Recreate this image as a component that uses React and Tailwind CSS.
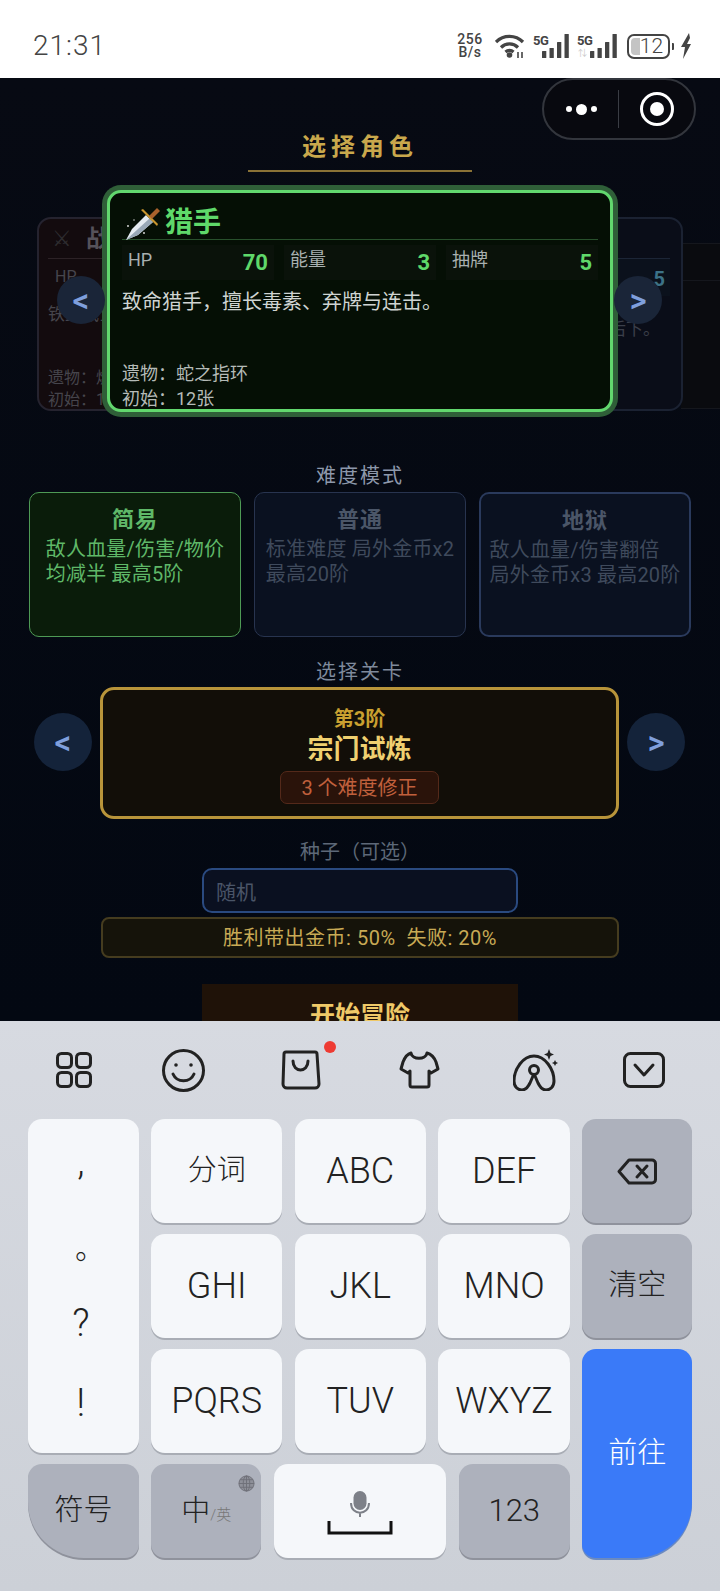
import { Fragment } from 'react'

const CJK = { fontFamily: 'Roboto, "Noto Sans CJK SC", sans-serif' }

const MODES = [
  { name: '简易', lines: ['敌人血量/伤害/物价', '均减半 最高5阶'], active: true },
  { name: '普通', lines: ['标准难度 局外金币x2', '最高20阶'] },
  { name: '地狱', lines: ['敌人血量/伤害翻倍', '局外金币x3 最高20阶'], thick: true },
]

function Bars() {
  return (
    <svg width="28" height="24" viewBox="0 0 28 24" className="absolute bottom-0 right-0" fill="#444">
      <rect x="1" y="17" width="4.300" height="7" rx="0.500" />
      <rect x="8.500" y="14" width="4.300" height="10" rx="0.500" />
      <rect x="16" y="8" width="4.300" height="16" rx="0.500" />
      <rect x="23.500" y="0" width="4.300" height="24" rx="0.500" />
    </svg>
  )
}

function StatusIcons() {
  return (
    <div className="flex items-center text-[#444]">
      <div className="flex w-[28px] flex-col items-center text-[14px] font-medium leading-[13px] tracking-[0.5px]">
        <span>256</span>
        <span>B/s</span>
      </div>
      <svg width="32" height="24" viewBox="0 0 32 24" className="ml-[11px]" fill="none" stroke="#444" strokeWidth="3.200">
        <path d="M1 8 A19 19 0 0 1 28 8" />
        <path d="M6 13.500 A12 12 0 0 1 23 13.500" />
        <path d="M10.500 18 A6 6 0 0 1 18.500 18" />
        <circle cx="14.500" cy="21" r="2.800" fill="#444" stroke="none" />
        <path d="M23 18v6M27 18v6" strokeWidth="1.600" />
      </svg>
      <div className="relative ml-[6px] h-[24px] w-[36px]">
        <span className="absolute left-0 top-0 text-[13px] font-bold leading-[13px] tracking-[-0.5px]">5G</span>
        <Bars />
      </div>
      <div className="relative ml-[8px] h-[24px] w-[40px]">
        <span className="absolute left-0 top-0 text-[13px] font-bold leading-[13px] tracking-[-0.5px]">5G</span>
        <span className="absolute bottom-0 left-[1px] text-[9px] leading-[10px] text-[#c8c8c8]">⇅</span>
        <Bars />
      </div>
      <div className="relative ml-[10px] flex h-[25px] w-[43px] items-center justify-center rounded-[7px] border-2 border-[#444] pl-[6px] text-[21px] font-light leading-none">
        <span className="absolute bottom-[2px] left-[2px] top-[2px] w-[9px] rounded-l-[4px] bg-[#c4c4c4]" />
        <span className="relative">12</span>
      </div>
      <span className="ml-[2px] h-[7px] w-[2px] rounded-r-[1px] bg-[#444]" />
      <svg width="12" height="26" viewBox="0 0 12 26" className="ml-[6px]">
        <path d="M9 0 1 14h4l-2 12 8-15H7l3-6z" fill="#444" />
      </svg>
    </div>
  )
}

function Sword() {
  return (
    <svg width="38" height="36" viewBox="0 0 38 36" className="mb-[-3px] ml-[2px] mr-[3px] shrink-0">
      <path d="M2 34 8 23 22 9l7 7-15 13z" fill="#e4ebf0" />
      <path d="M2 34 25.500 12.500 29 16 14 29z" fill="#98a8b6" />
      <path d="m17 4 2-1 15 15-1 2z" fill="#c9962e" />
      <path d="m25 10 8-8 3 3-8 8z" fill="#a8622c" />
      <circle cx="4" cy="20" r="0.900" fill="#e8e8e8" />
      <circle cx="20" cy="27" r="0.900" fill="#e8e8e8" />
      <circle cx="10" cy="14" r="0.700" fill="#e8e8e8" />
    </svg>
  )
}

function Stat({ label, value }) {
  return (
    <div className="flex h-[35px] flex-1 items-start justify-between bg-[#0a120a] px-[6px]">
      <span className="mt-[3px] text-[18px] leading-[24px] text-[#a8b0b0]">{label}</span>
      <span className="mt-[3px] text-[22px] font-bold leading-[30px] text-[#5fd86a]">{value}</span>
    </div>
  )
}

function Arrow({ dir, big, className }) {
  const size = big ? 'h-[58px] w-[58px] bg-[#14233a]' : 'h-[48px] w-[48px] bg-[#1a2538]'
  return (
    <div className={`flex shrink-0 items-center justify-center rounded-full text-[33px] font-medium leading-none text-[#7f9fdc] ${size} ${className || ''}`}>
      {dir}
    </div>
  )
}

function CharacterCarousel() {
  return (
    <div className="relative mt-[15px] h-[229px]">
      {/* cards behind the selected one */}
      <div className="absolute left-[681px] top-[56px] h-[166px] w-[60px] border-y border-[#15171d] bg-[#0a0b0f]">
        <div className="mt-[36px] border-t border-[#15171d]" />
      </div>
      <div className="absolute left-[37px] top-[30px] flex h-[194px] w-[300px] flex-col rounded-[14px] border-2 border-[#25232f] bg-[#130b0e] px-[9px]">
        <div className="flex h-[40px] shrink-0 items-center border-b border-[#2c2226] text-[24px] font-bold text-[#55525a]">
          <span className="ml-[4px] mr-[14px] text-[22px] font-normal text-[#2e2d30]">⚔</span>战士
        </div>
        <div className="px-[7px] text-[16px] leading-[36px] text-[#46454c]">HP</div>
        <div className="mt-[6px] text-[17px] leading-[26px] text-[#46454c]">铁血战士，攻防兼备。</div>
        <div className="mb-[-2px] mt-auto text-[16px] leading-[22px] text-[#46454c]">
          遗物：燃烧之血
          <br />
          初始：12张
        </div>
      </div>
      <div className="absolute left-[383px] top-[30px] flex h-[194px] w-[300px] flex-col items-end rounded-[14px] border-2 border-[#1b2232] bg-[#0a0d18] px-[11px]">
        <div className="h-[40px] w-full shrink-0 border-b border-[#1c2536]" />
        <div className="flex h-[37px] w-[150px] shrink-0 justify-end bg-[#0b111c] px-[5px] text-[20px] font-bold leading-[40px] text-[#3c7288]">5</div>
        <div className="mt-[20px] pr-[10px] text-[17px] leading-[26px] text-[#3b3f4a]">然后下。</div>
      </div>

      <div className="absolute left-[107px] top-[3px] flex h-[222px] w-[506px] flex-col rounded-[14px] border-[3px] border-[#62d86e] bg-[#050f05] px-[12px] shadow-[0_0_0_5px_#2f5f38]">
        <div className="flex h-[47px] shrink-0 items-end border-b border-[#28502c]">
          <Sword />
          <span className="mb-[-2px] text-[28px] font-bold leading-[36px] text-[#5fd86a]">猎手</span>
        </div>
        <div className="mt-[5px] flex gap-[10px]">
          <Stat label="HP" value="70" />
          <Stat label="能量" value="3" />
          <Stat label="抽牌" value="5" />
        </div>
        <div className="mt-[6px] text-[20px] leading-[32px] text-[#cfd4d2]">致命猎手，擅长毒素、弃牌与连击。</div>
        <div className="mb-[-2px] mt-auto text-[18px] leading-[25px] text-[#b5bbb8]">
          遗物：蛇之指环
          <br />
          初始：12张
        </div>
      </div>

      <Arrow dir="<" className="absolute left-[57px] top-[89px]" />
      <Arrow dir=">" className="absolute left-[614px] top-[89px]" />
    </div>
  )
}

function KeyboardIcons() {
  const s = { fill: 'none', stroke: '#222', strokeWidth: 3, strokeLinecap: 'round', strokeLinejoin: 'round' }
  return (
    <div className="flex h-[98px] items-center pl-[56px]">
      <svg width="36" height="36" viewBox="0 0 36 36" {...s}>
        <rect x="1.500" y="1.500" width="14" height="14" rx="4" />
        <rect x="20.500" y="1.500" width="14" height="14" rx="4" />
        <rect x="1.500" y="20.500" width="14" height="14" rx="4" />
        <rect x="20.500" y="20.500" width="14" height="14" rx="4" />
      </svg>
      <svg width="43" height="43" viewBox="0 0 43 43" className="ml-[70px]" {...s}>
        <circle cx="21.500" cy="21.500" r="20" />
        <path d="M11 25c4 9 17 9 21 0" />
        <circle cx="14" cy="16" r="1.800" fill="#222" stroke="none" />
        <circle cx="29" cy="16" r="1.800" fill="#222" stroke="none" />
      </svg>
      <div className="relative ml-[76px] h-[40px] w-[40px]">
        <svg width="40" height="40" viewBox="0 0 40 40" {...s}>
          <path d="M5 2h29a2 2 0 0 1 2 2l2 30a4 4 0 0 1-4 4H6a4 4 0 0 1-4-4L3 4a2 2 0 0 1 2-2z" />
          <path d="M12 11c0 12 15 12 15 0" />
        </svg>
        <span className="absolute right-[-15px] top-[-9px] h-[12px] w-[12px] rounded-full bg-[#ee3b33]" />
      </div>
      <svg width="42" height="38" viewBox="0 0 42 38" className="ml-[77px]" {...s}>
        <path d="M13 2c1 7 15 7 16 0 4 1 7 4 9 9l2 7-7 4-2-2v14a2 2 0 0 1-2 2H14a2 2 0 0 1-2-2V20l-2 2-7-4 2-7c2-5 4-8 8-9z" />
      </svg>
      <svg width="46" height="42" viewBox="0 0 46 42" className="ml-[73px]" {...s}>
        <path d="M9 41c-4 0-8-3-8-9C1 20 10 7 21 7s20 13 20 25c0 6-4 9-8 9s-6-3-8-7l-3-7h-2l-3 7c-2 4-4 7-8 7z" />
        <circle cx="21" cy="21" r="4.500" />
        <path d="m36 0 1.500 4L41 5.500 37.500 7 36 11l-1.500-4L31 5.500 34.500 4zM42 11l1 2 2 1-2 1-1 2-1-2-2-1 2-1z" fill="#222" stroke="none" />
      </svg>
      <svg width="42" height="36" viewBox="0 0 42 36" className="ml-[64px]" {...s}>
        <rect x="1.500" y="1.500" width="39" height="33" rx="6" />
        <path d="m12 13 9 10 9-10" />
      </svg>
    </div>
  )
}

function Key({ children, tone = 'light', className }) {
  const tones = {
    light: 'bg-[#f5f7fa] text-[#222] shadow-[0_2px_0_#a9adb5]',
    dark: 'bg-[#adb1bc] text-[#222] shadow-[0_2px_0_#8f929c]',
    blue: 'bg-[#3a7af8] text-white shadow-[0_2px_0_#6b8ac0]',
  }
  return (
    <div className={`flex items-center justify-center rounded-[14px] ${tones[tone]} ${className || ''}`}>
      {children}
    </div>
  )
}

function Keyboard() {
  const letter = 'text-[36px] font-light'
  const zh = 'text-[29px] font-light'
  return (
    <div className="h-[570px] bg-gradient-to-b from-[#d7dae1] to-[#ccd0d7]">
      <KeyboardIcons />
      <div className="grid grid-cols-[110.800px_131px_131.400px_131.400px_110px] grid-rows-[104px_104px_104px_94px] gap-x-[12.400px] gap-y-[11px] pl-[28px]">
        <Key className="row-span-3 flex-col !justify-start pr-[5px] pt-[23px] text-[38px] font-light">
          <span className="h-[40px] leading-[40px]">,</span>
          <span className="mt-[47px] h-[40px] pl-[18px] text-[30px] leading-[40px]">。</span>
          <span className="mt-[34px] h-[40px] leading-[40px]">?</span>
          <span className="mt-[40px] h-[40px] leading-[40px]">!</span>
        </Key>
        <Key className={zh}>分词</Key>
        <Key className={letter}>ABC</Key>
        <Key className={letter}>DEF</Key>
        <Key tone="dark">
          <svg width="40" height="27" viewBox="0 0 40 27" fill="none" stroke="#222" strokeWidth="3" strokeLinejoin="round" strokeLinecap="round">
            <path d="M12 2h23a3.500 3.500 0 0 1 3.500 3.500v16A3.500 3.500 0 0 1 35 25H12L2 13.500z" />
            <path d="m20 8 10 11M30 8 20 19" />
          </svg>
        </Key>
        <Key className={letter}>GHI</Key>
        <Key className={letter}>JKL</Key>
        <Key className={letter}>MNO</Key>
        <Key tone="dark" className={zh}>清空</Key>
        <Key className={letter}>PQRS</Key>
        <Key className={letter}>TUV</Key>
        <Key className={letter}>WXYZ</Key>
        <Key tone="blue" className={`row-span-2 rounded-br-[56px] ${zh}`}>前往</Key>
        <Key tone="dark" className={`rounded-bl-[56px] ${zh}`}>符号</Key>
        <div className="col-span-3 flex justify-between">
          <Key tone="dark" className="relative w-[110px]">
            <span className="text-[29px] font-light leading-none">中</span>
            <span className="mt-[8px] text-[15px] font-light text-[#777]">/英</span>
            <svg width="17" height="17" viewBox="0 0 18 18" className="absolute right-[6px] top-[11px]" fill="none" stroke="#6e7078" strokeWidth="1">
              <circle cx="9" cy="9" r="8" fill="#8e9099" />
              <ellipse cx="9" cy="9" rx="3.500" ry="8" />
              <path d="M1 9h16M2 5h14M2 13h14M9 1v16" />
            </svg>
          </Key>
          <Key className="w-[172px] flex-col">
            <svg width="66" height="46" viewBox="0 0 66 46" fill="none" className="mt-[4px]">
              <rect x="26.500" y="1" width="13" height="19" rx="6.500" fill="#7d8088" />
              <path d="M24 13c0 13 18 13 18 0M33 23v4" stroke="#7d8088" strokeWidth="2" />
              <path d="M2 31v12h62V31" stroke="#111" strokeWidth="3" />
            </svg>
          </Key>
          <Key tone="dark" className="w-[111px] text-[31px] font-light">123</Key>
        </div>
      </div>
    </div>
  )
}

export default function App() {
  return (
    <div className="flex h-[1591px] w-[720px] flex-col overflow-hidden" style={CJK}>
      <div className="flex h-[78px] shrink-0 items-center justify-between bg-white pl-[33px] pr-[28px] pt-[14px]">
        <span className="text-[28px] font-light tracking-[1px] text-[#444]">21:31</span>
        <StatusIcons />
      </div>

      <div className="relative h-[943px] shrink-0 overflow-hidden bg-gradient-to-b from-[#070a13] to-[#030812]">
        {/* WeChat mini program capsule */}
        <div className="absolute right-[24px] top-0 flex h-[62px] w-[154px] items-center rounded-full border-2 border-[#33363d] bg-[#08090f]">
          <div className="flex w-[74px] items-center justify-center gap-[4px]">
            <span className="h-[6px] w-[6px] rounded-full bg-white" />
            <span className="h-[11px] w-[11px] rounded-full bg-white" />
            <span className="h-[6px] w-[6px] rounded-full bg-white" />
          </div>
          <span className="h-[38px] w-px bg-[#3a3d44]" />
          <div className="flex flex-1 items-center justify-center">
            <span className="flex h-[34px] w-[34px] items-center justify-center rounded-full border-[3px] border-white">
              <span className="h-[14px] w-[14px] rounded-full bg-white" />
            </span>
          </div>
        </div>

        <div className="pt-[53px] text-center text-[24px] font-bold leading-[32px] tracking-[5px] text-[#c9a84c]">选择角色</div>
        <div className="mx-auto mt-[7px] h-[2px] w-[224px] bg-[#8a7236]" />

        <CharacterCarousel />

        <div className="mt-[46px] text-center text-[20px] leading-[28px] tracking-[2px] text-[#8d98ab]">难度模式</div>
        <div className="mt-[2px] flex gap-[13px] pl-[29px]">
          {MODES.map((m) => (
            <div
              key={m.name}
              className={`h-[145px] w-[212px] rounded-[10px] pt-[12px] ${
                m.active
                  ? 'border border-[#4e9a55] bg-[#0a1c0a]'
                  : m.thick
                    ? 'border-2 border-[#2a3a5c] bg-[#0a1120]'
                    : 'border border-[#28344f] bg-[#0a1120]'
              }`}
            >
              <div className={`text-center text-[22px] font-bold leading-[30px] tracking-[1px] ${m.active ? 'text-[#5fb868]' : 'text-[#4b5668]'}`}>{m.name}</div>
              <div className={`mx-auto mt-[2px] w-fit text-[20px] leading-[25px] tracking-[0.2px] ${m.active ? 'text-[#5fb868]' : 'text-[#3f4a5c]'}`}>
                {m.lines.map((l) => (
                  <Fragment key={l}>
                    {l}
                    <br />
                  </Fragment>
                ))}
              </div>
            </div>
          ))}
        </div>

        <div className="mt-[21px] text-center text-[20px] leading-[28px] tracking-[2px] text-[#7f8a9c]">选择关卡</div>
        <div className="mt-[1px] flex items-start justify-between pl-[34px] pr-[35px]">
          <Arrow dir="<" big className="mt-[26px]" />
          <div className="flex h-[132px] w-[519px] flex-col items-center rounded-[14px] border-[3px] border-[#b8943a] bg-[#120e08] pt-[16px]">
            <div className="text-[20px] font-bold leading-[27px] text-[#c9a030]">第3阶</div>
            <div className="text-[26px] font-bold leading-[33px] text-[#efd070]">宗门试炼</div>
            <div className="mt-[5px] flex h-[33px] w-[159px] items-center justify-center rounded-[7px] border border-[#54291a] bg-[#2a130a] text-[20px] text-[#c0603c]">3 个难度修正</div>
          </div>
          <Arrow dir=">" big className="mt-[26px]" />
        </div>

        <div className="mt-[18px] text-center text-[20px] leading-[30px] text-[#5d6878]">种子（可选）</div>
        <div className="ml-[202px] mt-[1px] flex h-[45px] w-[316px] items-center rounded-[10px] border-2 border-[#2a4a80] bg-[#0a1020] pl-[12px] pt-[5px] text-[20px] text-[#4a5568]">随机</div>
        <div className="ml-[101px] mt-[4px] flex h-[41px] w-[518px] items-center justify-center whitespace-pre rounded-[8px] border-2 border-[#453c1f] bg-[#15130a] pt-[1px] text-[20px] tracking-[0.500px] text-[#c8aa55]">胜利带出金币: 50%  失败: 20%</div>
        <div className="ml-[202px] mt-[26px] flex h-[60px] w-[316px] justify-center bg-[#1f1208] pt-[14px] text-[25px] font-bold leading-[36px] text-[#efc968]">开始冒险</div>
      </div>

      <Keyboard />
    </div>
  )
}
